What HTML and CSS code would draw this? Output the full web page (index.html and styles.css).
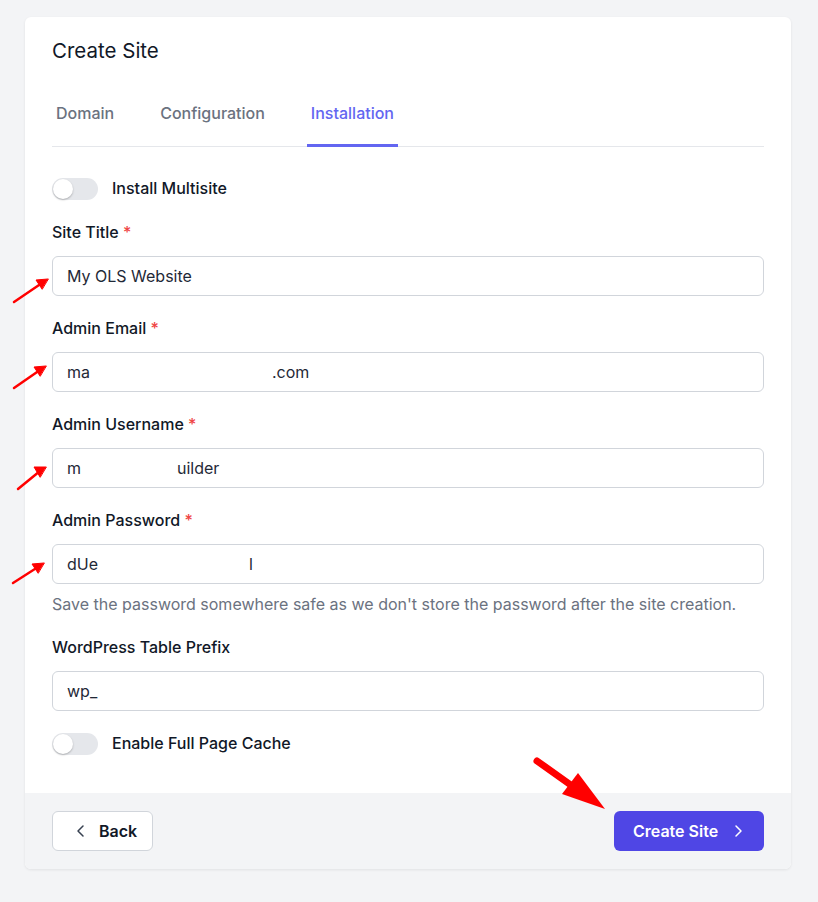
FILE: index.html
```html
<!DOCTYPE html>
<html lang="en">
<head>
    <meta charset="UTF-8">
    <meta name="viewport" content="width=device-width, initial-scale=1.0">
    <title>Create Site</title>
    <link rel="stylesheet" href="styles.css">
</head>
<body>
    <div class="card">
        <div class="card-head">
            <h1>Create Site</h1>
            <nav class="tabs">
                <a class="tab">Domain</a>
                <a class="tab">Configuration</a>
                <a class="tab active">Installation</a>
            </nav>
        </div>
        <div class="card-body">
            <div class="switch-row">
                <span class="switch"><span class="knob"></span></span>
                <span class="switch-label">Install Multisite</span>
            </div>

            <div class="field">
                <label>Site Title <span class="req">*</span></label>
                <div class="input">My OLS Website</div>
            </div>

            <div class="field">
                <label>Admin Email <span class="req">*</span></label>
                <div class="input"><span>ma</span><span class="hidden-email"></span><span>.com</span></div>
            </div>

            <div class="field">
                <label>Admin Username <span class="req">*</span></label>
                <div class="input"><span>m</span><span class="hidden-user"></span><span>uilder</span></div>
            </div>

            <div class="field">
                <label>Admin Password <span class="req">*</span></label>
                <div class="input"><span>dUe</span><span class="hidden-pass"></span><span>l</span></div>
                <p class="help">Save the password somewhere safe as we don't store the password after the site creation.</p>
            </div>

            <div class="field">
                <label>WordPress Table Prefix</label>
                <div class="input">wp_</div>
            </div>

            <div class="switch-row">
                <span class="switch"><span class="knob"></span></span>
                <span class="switch-label">Enable Full Page Cache</span>
            </div>
        </div>
        <div class="card-foot">
            <button class="btn btn-back">
                <svg width="16" height="16" viewBox="0 0 16 16"><path d="M10 3 5 8l5 5" fill="none" stroke="#374151" stroke-width="1.5" stroke-linecap="round" stroke-linejoin="round"/></svg>
                Back
            </button>
            <button class="btn btn-create">
                Create Site
                <svg width="16" height="16" viewBox="0 0 16 16"><path d="M6 3l5 5-5 5" fill="none" stroke="#fff" stroke-width="1.5" stroke-linecap="round" stroke-linejoin="round"/></svg>
            </button>
        </div>
    </div>

    <svg class="arrows" width="818" height="902" viewBox="0 0 818 902">
        <g stroke="#f00" stroke-width="2.5" stroke-linecap="round" fill="#f00">
            <line x1="14" y1="302" x2="42" y2="283"/>
            <polygon points="48,279 36,280 42,289" stroke-width="1"/>
            <line x1="14" y1="388" x2="40" y2="370"/>
            <polygon points="46,366 34,367 40,376" stroke-width="1"/>
            <line x1="18" y1="489" x2="40" y2="471"/>
            <polygon points="46,467 34,467 40,477" stroke-width="1"/>
            <line x1="13" y1="583" x2="38" y2="567"/>
            <polygon points="44,563 32,564 38,573" stroke-width="1"/>
        </g>
        <line x1="537" y1="761" x2="575" y2="788" stroke="#f00" stroke-width="7" stroke-linecap="round"/>
        <polygon points="605,809 562,794 578,773" fill="#f00"/>
    </svg>
</body>
</html>
```

FILE: styles.css
```css
body { margin: 0; padding: 17px 0 30px 25px; background: #f3f4f6; font-family: Inter, "Noto Sans", sans-serif; color: #111827; }
.card { width: 766px; background: #fff; border-radius: 6px; box-shadow: 0 1px 3px rgba(0,0,0,0.08); overflow: hidden; }
.card-head { padding: 20px 27px 0 27px; }
h1 { margin: 0; font-size: 20.5px; font-weight: 400; line-height: 28px; color: #111827; }
.tabs { display: flex; gap: 38px; margin-top: 20px; border-bottom: 1px solid #e5e7eb; }
.tab { padding: 17px 4px 20px; font-size: 16px; font-weight: 450; line-height: 22px; color: #6b7280; border-bottom: 3px solid transparent; margin-bottom: -1px; }
.tab.active { color: #6366f1; border-bottom-color: #6366f1; }
.card-body { padding: 31px 27px 38px; display: flex; flex-direction: column; gap: 22px; }
.switch-row { display: flex; align-items: center; gap: 14px; height: 22px; }
.switch { width: 46px; height: 22px; border-radius: 11px; background: #e5e7eb; position: relative; }
.knob { position: absolute; left: 1px; top: 1px; width: 20px; height: 20px; border-radius: 50%; background: #fff; box-shadow: 0 1px 2px rgba(0,0,0,0.25); }
.switch-label { font-size: 16px; font-weight: 450; line-height: 20px; margin-top: -3px; color: #111827; }
.field label { display: block; font-size: 16px; font-weight: 450; line-height: 20px; color: #111827; margin-bottom: 14px; }
.req { color: #ef4444; }
.input { height: 38px; border: 1px solid #d1d5db; border-radius: 6px; padding: 0 14px; display: flex; align-items: center; font-size: 16px; color: #1f2937; }
.hidden-email { display: inline-block; width: 182px; }
.hidden-user { display: inline-block; width: 96px; }
.hidden-pass { display: inline-block; width: 151px; }
.help { margin: 10px 0 1px; font-size: 16px; line-height: 20px; color: #6b7280; }
.card-foot { background: #f3f4f6; padding: 18px 27px; display: flex; justify-content: space-between; }
.btn { height: 40px; border-radius: 6px; font-family: inherit; font-size: 16px; font-weight: 600; display: flex; align-items: center; gap: 10px; cursor: pointer; }
.btn-back { width: 101px; background: #fff; border: 1px solid #d1d5db; color: #111827; padding: 0 0 0 20px; }
.btn-create { width: 150px; background: #4f46e5; border: none; color: #fff; padding: 0 0 0 19px; gap: 12px; }
.arrows { position: absolute; left: 0; top: 0; pointer-events: none; }
```
